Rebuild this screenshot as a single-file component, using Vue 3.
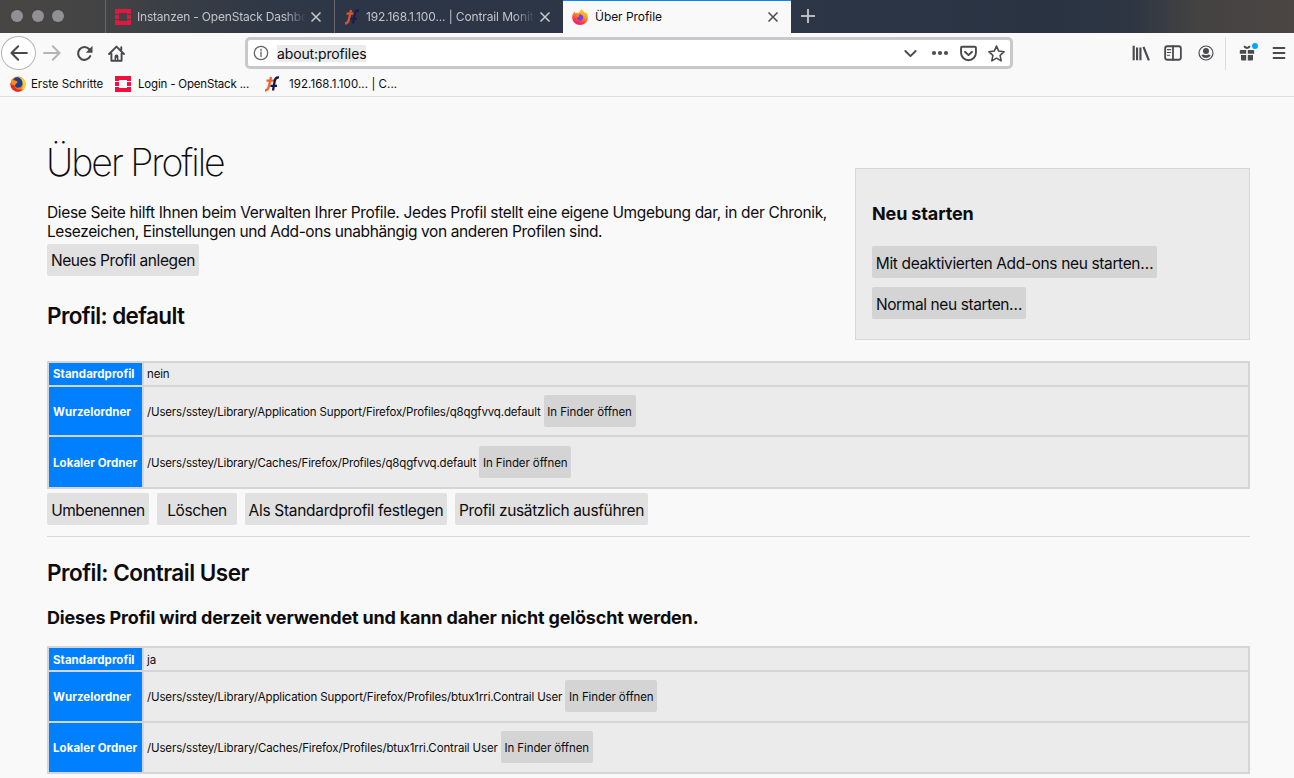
<script setup>
const profiles = [
  {
    name: 'default',
    key: 'first',
    notice: '',
    rows: [
      { label: 'Standardprofil', value: 'nein', cls: 'short' },
      { label: 'Wurzelordner', value: '/Users/sstey/Library/Application Support/Firefox/Profiles/q8qgfvvq.default', open: true, cls: 'tall' },
      { label: 'Lokaler Ordner', value: '/Users/sstey/Library/Caches/Firefox/Profiles/q8qgfvvq.default', open: true, cls: 'tall last' },
    ],
    actions: [
      { text: 'Umbenennen', cls: 'w-rename' },
      { text: 'Löschen', cls: 'w-delete' },
      { text: 'Als Standardprofil festlegen', cls: 'w-default' },
      { text: 'Profil zusätzlich ausführen', cls: 'w-launch' },
    ],
  },
  {
    name: 'Contrail User',
    key: 'second',
    notice: 'Dieses Profil wird derzeit verwendet und kann daher nicht gelöscht werden.',
    rows: [
      { label: 'Standardprofil', value: 'ja', cls: 'short' },
      { label: 'Wurzelordner', value: '/Users/sstey/Library/Application Support/Firefox/Profiles/btux1rri.Contrail User', open: true, cls: 'tall' },
      { label: 'Lokaler Ordner', value: '/Users/sstey/Library/Caches/Firefox/Profiles/btux1rri.Contrail User', open: true, cls: 'tall last' },
    ],
    actions: [],
  },
]
</script>

<template>
  <div class="window">
    <header class="tabs">
      <div class="lights"><i></i><i></i><i></i></div>
      <div class="tab">
        <svg class="fav" viewBox="0 0 16 16"><path fill="#e0173f" d="M0 0h16v5h-4V4H4v1H0zM0 6h4v4H0zM12 6h4v4h-4zM0 11h4v1h8v-1h4v5H0z" /></svg>
        <span class="label fade t1">Instanzen - OpenStack Dashboa</span>
        <svg class="x" viewBox="0 0 12 12"><path d="M1.500 1.500l9 9M10.500 1.500l-9 9" /></svg>
      </div>
      <div class="tab">
        <svg class="fav tf" viewBox="0 0 16 16"><path fill="none" stroke="#d9552c" stroke-width="2.300" d="M1 14.500Q4 14.500 5 10L7 1M2.500 4.600h7.500" /><path fill="none" stroke="#1c1b4b" stroke-width="2.300" d="M15 1.500Q11.500 1 10.700 5L9 14.500M6.500 9.800h6.500" /></svg>
        <span class="label fade t2">192.168.1.100... | Contrail Monito</span>
        <svg class="x" viewBox="0 0 12 12"><path d="M1.500 1.500l9 9M10.500 1.500l-9 9" /></svg>
      </div>
      <div class="tab active">
        <svg class="fav" viewBox="0 0 16 16">
          <defs>
            <linearGradient id="fx" x1=".8" y1="0" x2=".3" y2="1"><stop offset="0" stop-color="#ffe23a" /><stop offset=".4" stop-color="#ff9a20" /><stop offset=".75" stop-color="#ff3b47" /><stop offset="1" stop-color="#e31587" /></linearGradient>
          </defs>
          <path fill="url(#fx)" d="M9.500 0c.8 1.500 2.800 2.300 3.300 3.900l.9-.8c1.500 1.600 2.300 3.400 2.200 5.700C15.700 13 12.300 16 8 16S.2 12.700.2 8.500C.2 6 1 4 2.600 2.500l.5 1.700C4 3.500 5.500 3.500 6.500 4 7.400 3.500 8 1.500 9.500 0z" />
          <path fill="#7542e5" d="M5 5.500l3-.3c2.500.2 3.500 1.800 3.300 3.600-.3 2-1.800 3-3.500 2.800C6 11.400 5 10 5.200 8.500l2-1z" />
          <path fill="#ff8a1f" d="M3.500 4.500l4 .7-.5 1.600-1.700 1z" />
        </svg>
        <span class="label t3">Über Profile</span>
        <svg class="x" viewBox="0 0 12 12"><path d="M1.500 1.500l9 9M10.500 1.500l-9 9" /></svg>
      </div>
      <svg class="plus" viewBox="0 0 14 14"><path d="M7 0v14M0 7h14" /></svg>
    </header>

    <nav class="toolbar">
      <div class="back"><svg viewBox="0 0 16 16"><path d="M15 8H1.500M7.300 2L1.300 8l6 6" /></svg></div>
      <svg class="ic forward" viewBox="0 0 16 16"><path d="M1 8h13.500M8.700 2l6 6-6 6" /></svg>
      <svg class="ic reload" viewBox="0 0 16 16"><path d="M13.400 10.500A6 6 0 1 1 12.500 4" /><path class="solid" d="M15.500.8v6.400H9.200z" /></svg>
      <svg class="ic home" viewBox="0 0 16 16"><path d="M1 8.500L8 1.500l7 7M3.200 8v6.800h9.600V8M12.500 5V2" /><path class="solid" d="M6.200 15V10.500Q6.200 9 8 9t1.800 1.500V15H8.500v-2.500h-1V15z" /></svg>
      <div class="urlbar">
        <svg class="info" viewBox="0 0 16 16"><circle cx="8" cy="8" r="6.700" /><path d="M8 7v4.500M8 4.200v1.200" /></svg>
        <span class="url">about:profiles</span>
        <svg class="u chev" viewBox="0 0 16 16"><path d="M2.500 5.300L8 10.800l5.500-5.500" /></svg>
        <svg class="u dots" viewBox="0 0 18 16"><circle cx="3" cy="8" r="2.100" /><circle cx="9" cy="8" r="2.100" /><circle cx="15" cy="8" r="2.100" /></svg>
        <svg class="u pocket" viewBox="0 0 16 16"><path d="M2 1.700h12q1 0 1 1v4.600a7 7 0 0 1-14 0V2.700q0-1 1-1z" /><path d="M4.700 6.400L8 9.500l3.300-3.100" /></svg>
        <svg class="u star" viewBox="0 0 16 16"><path d="M8 1l2.100 4.700 5.100.6-3.800 3.500 1 5.100L8 12.400l-4.400 2.500 1-5.100L.8 6.300l5.100-.6z" /></svg>
      </div>
      <div class="tools">
        <svg class="ic lib" viewBox="0 0 16 16"><path d="M1.500 1.500v13M4.500 3v11.500M7.500 3v11.500M10.200 2.500l4.800 12" /></svg>
        <svg class="ic side" viewBox="0 0 16 16"><rect x="1" y="2" width="14" height="12" rx="2" /><path d="M8 2v12" /><path class="thin" d="M3 5h3M3 7.500h3M3 10h2" /></svg>
        <svg class="ic acct" viewBox="0 0 16 16"><circle cx="8" cy="8" r="7" /><circle class="solid" cx="8" cy="6" r="3" /><path class="solid" d="M3.400 10q1.400-.5 2.100-.5Q8 11 10.500 9.500q1 0 2.100.5Q11.500 13 8 13T3.400 10z" /></svg>
        <span class="divider"></span>
        <span class="gift"><svg class="ic" viewBox="0 0 16 16"><path class="solid" d="M1.500 5h5.700v3.700H.8V5.700zM8.800 5h5.700l.7.700v3H8.800zM2 10h5.200v5.500H3q-1 0-1-1zM8.800 10H14v4.500q0 1-1 1H8.800zM4.700.8q2-.7 3.300 1.400Q9.300.1 11.300.8q.3 2.700-3.300 3.200Q4.400 3.500 4.700.8z" /></svg><b></b></span>
        <svg class="ic menu" viewBox="0 0 16 16"><path d="M2.500 3h11M2.500 8h11M2.500 13h11" /></svg>
      </div>
    </nav>

    <div class="bookmarks">
      <svg class="fav" viewBox="0 0 16 16"><circle cx="8" cy="8.200" r="7.600" fill="#ff7a12" /><path fill="#ffd02e" d="M9 1q6 1 6.600 6.500.2 6-5.600 8 4-4 2.500-8.500Q11 4 9 1z" /><path fill="#e22b25" d="M.5 7Q0 13.500 6 15.500q5 .8 7.500-2.500-5 2-8.500-1.500L3 7z" /><path fill="#15419b" d="M4 2.500Q7.500-.3 11 3q2.400 3 1 6.500-2 3-5.500 2-2.500-1-2-3.500L7.500 7 7 5 3 4.500z" /><path fill="#ff8a17" d="M1.500 3l3 1.500 3 .8L6 7.500 5 9.500l-3.500-1z" /></svg>
      <span class="b1">Erste Schritte</span>
      <svg class="fav os" viewBox="0 0 16 16"><path fill="#f0103c" d="M0 0h16v5h-4V4H4v1H0zM0 6h4v4H0zM12 6h4v4h-4zM0 11h4v1h8v-1h4v5H0z" /></svg>
      <span class="b2">Login - OpenStack ...</span>
      <svg class="fav tf2" viewBox="0 0 16 16"><path fill="none" stroke="#f26322" stroke-width="2.300" d="M1 14.500Q4 14.500 5 10L7 1M2.500 4.600h7.500" /><path fill="none" stroke="#15164a" stroke-width="2.300" d="M15 1.500Q11.500 1 10.700 5L9 14.500M6.500 9.800h6.500" /></svg>
      <span class="b3">192.168.1.100... | C...</span>
    </div>

    <main>
      <section class="intro">
        <div class="lead">
          <h1>Über Profile</h1>
          <p><span class="first-line">Diese Seite hilft Ihnen beim Verwalten Ihrer Profile. Jedes Profil stellt eine eigene Umgebung dar, in der Chronik,</span><br />Lesezeichen, Einstellungen und Add-ons unabhängig von anderen Profilen sind.</p>
          <button class="w-new">Neues Profil anlegen</button>
        </div>
        <aside>
          <h3>Neu starten</h3>
          <button class="dark w-safe">Mit deaktivierten Add-ons neu starten…</button>
          <button class="dark w-normal">Normal neu starten…</button>
        </aside>
      </section>

      <section v-for="p in profiles" :key="p.key" class="profile" :class="p.key">
        <h2>Profil: {{ p.name }}</h2>
        <h3 v-if="p.notice" class="notice">{{ p.notice }}</h3>
        <div class="table">
          <div v-for="r in p.rows" :key="r.label" class="row" :class="r.cls">
            <div class="th"><span>{{ r.label }}</span></div>
            <div class="td"><span class="path">{{ r.value }}</span><button v-if="r.open" class="dark small">In Finder öffnen</button></div>
          </div>
        </div>
        <div v-if="p.actions.length" class="actions">
          <button v-for="a in p.actions" :key="a.text" :class="a.cls">{{ a.text }}</button>
        </div>
      </section>
    </main>
  </div>
</template>

<style>
body { background: #f9f9fa; overflow: hidden; }
</style>

<style scoped>
* { box-sizing: border-box; }
.window { width: 1294px; height: 778px; overflow: hidden; background: #f9f9fa; color: #0c0c0d; font-family: Inter, "Liberation Sans", sans-serif; white-space: nowrap; }
svg { display: block; flex: none; }

.tabs { height: 33px; display: flex; background: linear-gradient(90deg, #484644 0, #444444 90px, #3b3f45 160px, #303946 250px, #2c3646 340px, #2c3646 800px, #293342 1050px, #2e3643 1130px, #444342 1200px, #4b4543 1294px); }
.lights { width: 105px; display: flex; gap: 8.500px; padding: 10px 0 0 11px; }
.lights i { width: 12px; height: 12px; border-radius: 50%; background: #919097; }
.tab { width: 229px; height: 33px; display: flex; align-items: center; padding: 0 12px 0 9px; border-left: 1px solid #65686d; color: #c3c5c9; font-size: 12px; }
.fav { width: 16px; height: 16px; }
.label { flex: 1; min-width: 0; margin: 1px 0 0 6px; line-height: 20px; letter-spacing: -.05px; }
.t1 { letter-spacing: -.2px; }
.t2 { letter-spacing: -.12px; }
.fade { mask-image: linear-gradient(90deg, #000 148px, transparent 169px); }
.x { width: 12px; height: 12px; fill: none; stroke: #c8cacd; stroke-width: 1.500; }
.active { background: #f9f9fa; color: #0c0c0d; border-left: 0; width: 228px; border-top: 1px solid #0a84ff; }
.active .label { margin-top: 0; margin-left: 7px; }
.active .x { stroke: #4a4a4d; }
.plus { width: 14px; height: 14px; margin: 9px 0 0 10px; fill: none; stroke: #b9bcc0; stroke-width: 2; }

.toolbar { height: 40px; display: flex; align-items: center; }
.toolbar svg { width: 18px; height: 18px; fill: none; stroke: #4a4a4c; stroke-width: 1.800; stroke-linecap: round; stroke-linejoin: round; }
.toolbar .solid { fill: #4a4a4c; stroke: none; }
.toolbar .thin { stroke-width: 1; }
.back { width: 35px; height: 34px; margin-left: 1px; border: 1px solid #b5b5b6; border-radius: 50%; background: #fff; display: flex; align-items: center; justify-content: center; }
.toolbar .forward { margin-left: 7px; stroke: #b4b4b6; }
.toolbar .reload { margin-left: 15px; width: 17px; height: 17px; stroke-width: 2; }
.toolbar .home { margin-left: 15px; width: 17px; height: 17px; }
.urlbar { width: 768px; height: 32px; margin-left: 120px; background: #fff; border: 3px solid #c9c9cb; border-radius: 5px; display: flex; align-items: center; }
.toolbar .info { width: 16px; height: 16px; margin-left: 5px; stroke: #666668; stroke-width: 1.300; }
.url { margin: 0 auto 0 8px; background: #ebebec; font-size: 14px; line-height: 17px; letter-spacing: -.13px; }
.toolbar .chev { width: 15px; height: 15px; stroke-width: 2; }
.toolbar .dots { margin-left: 13px; fill: #4e4e50; stroke: none; }
.toolbar .pocket { margin-left: 11px; width: 17px; height: 17px; }
.toolbar .star { margin: 0 5px 0 11px; width: 17px; height: 17px; stroke-width: 1.500; }
.tools { display: flex; align-items: center; margin-left: 119px; }
.toolbar .lib { stroke-linecap: butt; stroke-width: 1.900; }
.toolbar .side { margin-left: 14px; stroke-width: 1.600; }
.toolbar .acct { margin-left: 16px; width: 16px; height: 16px; stroke-width: 1.200; }
.divider { width: 1px; height: 33px; background: #dedee0; margin-left: 11px; }
.gift { position: relative; margin-left: 13px; }
.toolbar .gift svg { width: 16px; height: 16px; }
.gift b { position: absolute; width: 6px; height: 6px; border-radius: 50%; background: #00a8fa; right: -3px; top: -2px; }
.toolbar .menu { margin-left: 16px; width: 16px; height: 16px; }

.bookmarks { height: 24px; display: flex; align-items: center; padding: 0 0 1px 10px; border-bottom: 1px solid #e0e0e1; font-size: 11.500px; }
.b1 { width: 73px; margin: 0 11px 0 5px; letter-spacing: -.04px; }
.b2 { width: 112px; margin: 0 15px 0 7px; letter-spacing: -.18px; }
.b3 { margin-left: 9px; letter-spacing: .07px; }
.bookmarks .tf2 { margin-left: -1px; }

main { padding: 0 44px 0 47px; }
button { display: inline-flex; align-items: center; justify-content: center; height: 32px; padding: 1px 0 0; border: 0; border-radius: 2px; background: #e1e1e2; color: #0c0c0d; font: 15.500px Inter, "Liberation Sans", sans-serif; letter-spacing: -.4px; white-space: nowrap; }
.dark { background: #d4d4d5; }
h1, h2, h3, p { margin: 0; }
.intro { display: flex; justify-content: space-between; height: 203px; }
h1 { margin: 42px 0 0 -1px; font-size: 37.500px; font-weight: 200; line-height: 47px; height: 46px; letter-spacing: -2.050px; }
.lead { width: 790px; }
p { margin: 18px 0 3px; font-size: 15.500px; line-height: 19px; letter-spacing: -.395px; }
.first-line { letter-spacing: -.342px; }
aside { width: 395px; height: 172px; margin-top: 71px; background: #ebebeb; border: 1px solid #d7d7db; padding: 33px 16px 0; display: flex; flex-direction: column; align-items: flex-start; }
h3 { font-size: 18px; font-weight: 650; line-height: 24px; letter-spacing: -.14px; }
aside h3 { margin-bottom: 20px; }
aside button + button { margin-top: 9px; }
.profile h2 { font-size: 22.500px; font-weight: 600; line-height: 32px; letter-spacing: -.62px; }
.first { height: 237px; border-bottom: 1px solid #d9d9dc; }
.first h2 { margin-bottom: 29px; }
.second { padding-top: 20px; }
.profile.second h2 { font-weight: 580; letter-spacing: -.5px; }
.notice { margin: 17px 0 16px; letter-spacing: -.17px; }
.table { border: 2px solid #d5d5d7; font-size: 11.500px; background: #ebebeb; }
.row { display: flex; height: 50.500px; border-bottom: 2px solid #d5d5d7; }
.row.short { height: 24px; }
.row.short .th, .row.short .path { padding-top: 0; }
.second .row.short .th, .second .row.short .path { padding-top: 1px; }
.row.last { height: 49px; border-bottom: 0; }
.first .row.tall { height: 50px; }
.th { width: 95px; border-right: 2px solid #d5d5d7; background: #0080ff; color: #fff; font-weight: 700; display: flex; align-items: center; padding: 1px 0 0 4px; letter-spacing: .05px; }
.td { display: flex; align-items: center; padding-left: 3px; }
.path { padding-top: 1px; letter-spacing: -.157px; }
.second .path { letter-spacing: -.135px; }
.small { font-size: 11.500px; width: 92px; margin-left: 3px; letter-spacing: -.1px; }
.actions { display: flex; gap: 8px; margin-top: 4px; }
.actions button, aside button { padding-top: 2px; }
.w-new { width: 152px; }
.w-safe { width: 285px; letter-spacing: -.36px; }
.w-normal { width: 154px; }
.w-rename { width: 102px; letter-spacing: -.48px; }
.w-delete { width: 80px; }
.w-default { width: 202px; letter-spacing: -.3px; }
.w-launch { width: 193px; letter-spacing: -.35px; }
</style>
